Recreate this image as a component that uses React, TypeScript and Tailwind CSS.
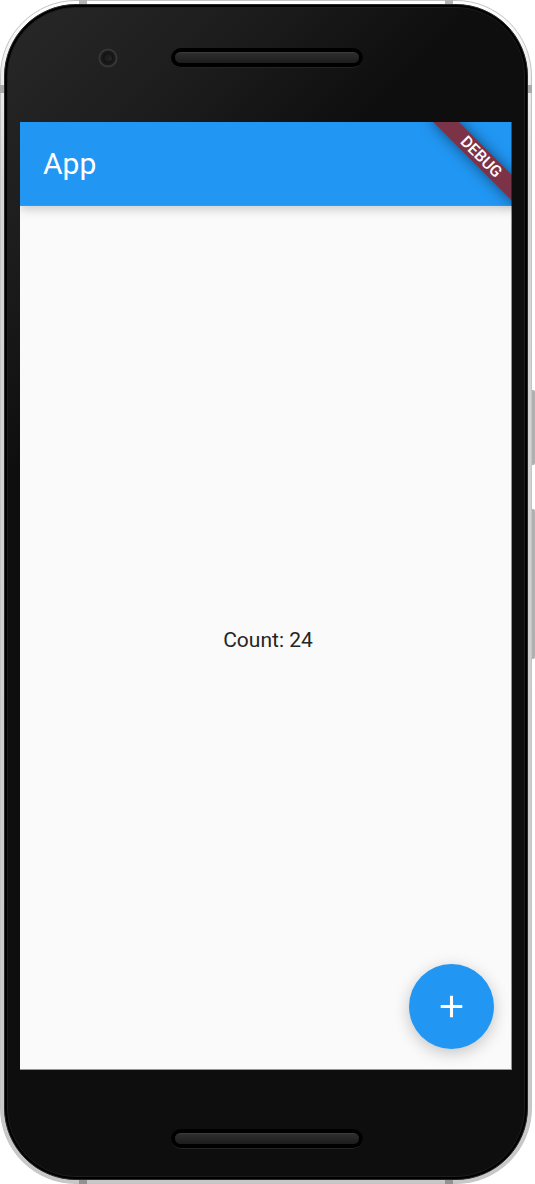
import { useState } from "react";

function Speaker() {
  return (
    <div className="h-5 w-48 rounded-full border-b border-[#242424] bg-black p-1">
      <div className="h-full rounded-full border-t border-[#3a3a3a] bg-linear-to-b from-[#2e2e2e] to-[#1c1c1c]" />
    </div>
  );
}

function Camera() {
  return (
    <svg className="absolute left-[90px] top-[40px] size-5" viewBox="0 0 20 20" aria-hidden="true">
      <circle cx="10" cy="10" r="8.6" fill="#191919" stroke="#363636" strokeWidth="2" />
      <circle cx="10" cy="10" r="6" fill="#141414" stroke="#1c1c1c" strokeWidth="1" />
      <circle cx="10.5" cy="10" r="3.8" fill="#1e1e1e" />
      <circle cx="12" cy="10.5" r="1.5" fill="#262626" />
    </svg>
  );
}

function AppScreen() {
  const [count, setCount] = useState(24);

  return (
    <div className="relative flex flex-1 flex-col overflow-hidden bg-[#fafafa] font-[Roboto,sans-serif]">
      <header className="flex h-[84px] shrink-0 items-center border-b border-[#3c98e2] bg-[#2196f3] px-[23px] shadow-[0_3px_10px_rgba(0,0,0,0.2)]">
        <h1 className="text-[30px] leading-9 text-white">App</h1>
      </header>
      <div className="absolute -right-[29px] top-[26px] flex h-[18px] w-[120px] rotate-45 items-center justify-center bg-[#7c3347] text-base font-medium leading-[18px] text-white shadow-[0_0_14px_rgba(0,0,0,0.5)]">
        DEBUG
      </div>
      <main className="flex flex-1 items-center justify-center">
        <p className="pl-1 pt-[3px] text-[21px] leading-6 text-[#252525]">Count: {count}</p>
      </main>
      <button
        type="button"
        aria-label="Increment"
        onClick={() => setCount(count + 1)}
        className="absolute bottom-[21px] right-[18px] flex size-[85px] items-center justify-center rounded-full bg-[#2196f3] text-white shadow-[0_4px_16px_rgba(0,0,0,0.22)]"
      >
        <svg className="size-[37px]" viewBox="0 0 24 24" fill="currentColor" aria-hidden="true">
          <path d="M19 13h-6v6h-2v-6H5v-2h6V5h2v6h6v2z" />
        </svg>
      </button>
      <div className="pointer-events-none absolute inset-0 border-b border-r border-black/40" />
    </div>
  );
}

export default function App() {
  return (
    <div className="flex min-h-screen bg-white pr-[3px]">
      <div className="relative flex flex-1 rounded-[76px] border border-[#c4c4c4] bg-linear-to-b from-white via-[#d8d5d5] via-15% to-[#c8c8c8] p-[3px]">
        <div className="absolute -top-px left-[78px] h-1 w-2 bg-[#b4b4b4]" />
        <div className="absolute -top-px right-[78px] h-1 w-2 bg-[#b4b4b4]" />
        <div className="absolute -bottom-px left-[78px] h-1 w-2 bg-[#929292]" />
        <div className="absolute -bottom-px right-[78px] h-1 w-2 bg-[#929292]" />
        <div className="absolute -left-px top-[84px] h-2 w-1 bg-[#a9a9a9]" />
        <div className="absolute -right-px top-[84px] h-2 w-1 bg-[#a9a9a9]" />
        <div className="absolute -right-1 top-[389px] h-[75px] w-[3px] rounded-r-xs bg-[#b0b0b0]" />
        <div className="absolute -right-1 top-[508px] h-[150px] w-[3px] rounded-r-xs bg-[#b0b0b0]" />
        <div className="flex flex-1 rounded-[72px] border border-[#292929] bg-black p-0.5">
          <div className="relative flex flex-1 flex-col rounded-[69px] border border-[#1d1d1d] bg-[linear-gradient(135deg,#282828_0px,#1c1c1c_180px,#0e0e0e_330px)] px-3">
            <Camera />
            <div className="flex h-[114px] shrink-0 items-center justify-center pb-[14px] pl-px">
              <Speaker />
            </div>
            <AppScreen />
            <div className="flex h-[106px] shrink-0 items-center justify-center pl-px pt-8">
              <Speaker />
            </div>
          </div>
        </div>
      </div>
    </div>
  );
}
